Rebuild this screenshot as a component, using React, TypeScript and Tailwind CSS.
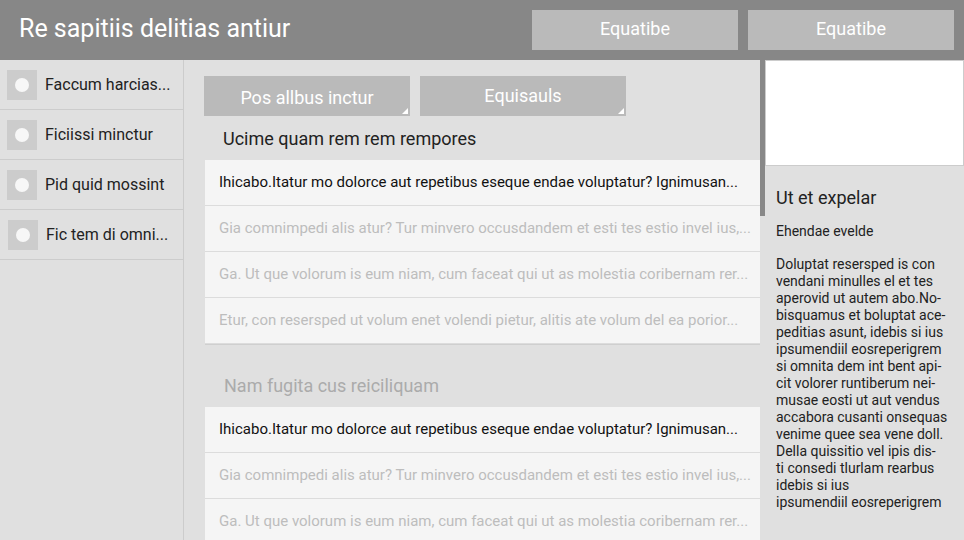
import React from 'react';

const font = { fontFamily: 'Roboto, "Liberation Sans", sans-serif' };

const navItems = ['Faccum harcias...', 'Ficiissi minctur', 'Pid quid mossint', 'Fic tem di omni...'];

const rowsA = [
  'Ihicabo.Itatur mo dolorce aut repetibus eseque endae voluptatur? Ignimusan...',
  'Gia comnimpedi alis atur? Tur minvero occusdandem et esti tes estio invel ius,...',
  'Ga. Ut que volorum is eum niam, cum faceat qui ut as molestia coribernam rer...',
  'Etur, con resersped ut volum enet volendi pietur, alitis ate volum del ea porior...',
];

const rowsB = rowsA.slice(0, 3);

const bodyLines = [
  'Doluptat resersped is con',
  'vendani minulles el et tes',
  'aperovid ut autem abo.No-',
  'bisquamus et boluptat ace-',
  'peditias asunt, idebis si ius',
  'ipsumendiil eosreperigrem',
  'si omnita dem int bent api-',
  'cit volorer runtiberum nei-',
  'musae eosti ut aut vendus',
  'accabora cusanti onsequas',
  'venime quee sea vene doll.',
  'Della quissitio vel ipis dis-',
  'ti consedi tlurlam rearbus',
  'idebis si ius',
  'ipsumendiil eosreperigrem',
];

// small white corner mark on the dropdown-ish buttons
const Corner = () => (
  <svg className="absolute right-[2px] bottom-[2px]" width="6" height="6" viewBox="0 0 6 6">
    <polygon points="6,0 6,6 0,6" fill="#fff" />
  </svg>
);

const Row: React.FC<{ text: string; active?: boolean }> = ({ text, active }) => (
  <div
    className={`h-[46px] flex items-center pl-[14px] pr-4 border-b border-[#dcdcdc] text-[15px] whitespace-nowrap overflow-hidden ${
      active ? 'text-[#111]' : 'text-[#bdbdbd]'
    }`}
  >
    {text}
  </div>
);

const App: React.FC = () => {
  return (
    <div className="w-[964px] h-[540px] overflow-hidden flex flex-col bg-[#e0e0e0]" style={font}>
      {/* cabecera */}
      <div className="h-[60px] shrink-0 bg-[#878787] flex items-center pl-[19px] pr-[10px]">
        <div className="text-white text-[25px] flex-1 pb-[3px]">Re sapitiis delitias antiur</div>
        <div className="flex gap-[10px]">
          <button className="w-[206px] h-[40px] bg-[#bababa] text-white text-[18px] pb-[4px]">Equatibe</button>
          <button className="w-[206px] h-[40px] bg-[#bababa] text-white text-[18px] pb-[4px]">Equatibe</button>
        </div>
      </div>

      <div className="flex flex-1 min-h-0">
        {/* menú lateral */}
        <div className="w-[184px] shrink-0 border-r border-[#cccccc]">
          {navItems.map((item, i) => (
            <div
              key={item}
              className={`h-[50px] flex items-center gap-[8px] border-b border-[#cccccc] ${i === 3 ? 'pl-[8px]' : 'pl-[7px]'}`}
            >
              <div className="w-[30px] h-[30px] bg-[#cccccc] flex items-center justify-center">
                <div className="w-[14px] h-[14px] rounded-full bg-[#f7f7f7]" />
              </div>
              <span className="text-[16px] text-[#222] pt-[1px]">{item}</span>
            </div>
          ))}
        </div>

        {/* contenido principal */}
        <div className="w-[576px] shrink-0 pl-[20px] pt-[16px] flex flex-col">
          <div className="flex gap-[10px] shrink-0">
            <button className="relative w-[206px] h-[40px] bg-[#bababa] text-white text-[18px] pt-[2px]">
              Pos allbus inctur
              <Corner />
            </button>
            <button className="relative w-[206px] h-[40px] bg-[#bababa] text-white text-[18px] pb-[2px]">
              Equisauls
              <Corner />
            </button>
          </div>
          <div className="h-[44px] shrink-0 flex items-center pl-[19px] text-[18px] text-[#222]">
            Ucime quam rem rem rempores
          </div>
          <div className="shrink-0 ml-[1px] bg-[#f5f5f5] border-b border-[#cfcfcf]">
            {rowsA.map((r, i) => (
              <Row key={r} text={r} active={i === 0} />
            ))}
          </div>
          <div className="h-[62px] shrink-0 flex items-end pb-[8px] pl-[20px] text-[18px] text-[#ababab]">
            Nam fugita cus reiciliquam
          </div>
          <div className="shrink-0 ml-[1px] bg-[#f5f5f5]">
            {rowsB.map((r, i) => (
              <Row key={r} text={r} active={i === 0} />
            ))}
          </div>
        </div>

        {/* barra de desplazamiento */}
        <div className="w-[5px] shrink-0">
          <div className="h-[156px] bg-[#888888]" />
        </div>

        {/* panel derecho */}
        <div className="flex-1 flex flex-col">
          <div className="h-[106px] bg-white border border-[#cccccc]" />
          <div className="pl-[11px] pt-[20px]">
            <div className="text-[18px] text-[#222] leading-[24px]">Ut et expelar</div>
            <div className="text-[14px] text-[#222] mt-[11px]">Ehendae evelde</div>
            <div className="text-[14px] text-[#222] leading-[17px] mt-[14px]">
              {bodyLines.map((l, i) => (
                <div key={i}>{l}</div>
              ))}
            </div>
          </div>
        </div>
      </div>
    </div>
  );
};

export default App;
